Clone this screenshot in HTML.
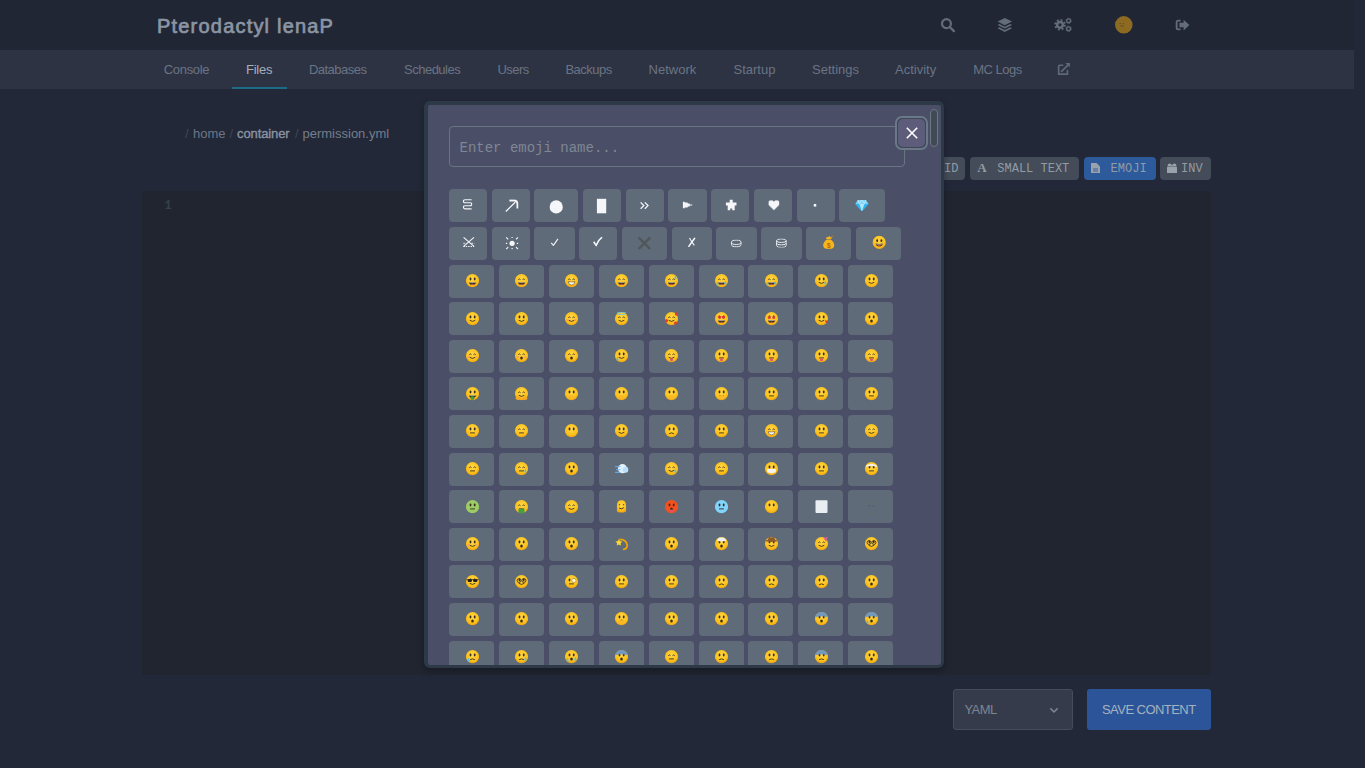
<!DOCTYPE html>
<html><head><meta charset="utf-8">
<style>
*{box-sizing:border-box}
html,body{margin:0;padding:0}
body{width:1365px;height:768px;overflow:hidden;background:#232838;position:relative;font-family:"Liberation Sans",sans-serif}
.a{position:absolute}
.t{position:absolute;white-space:nowrap;line-height:1}
.nav{color:#6b7483;font-size:13px;letter-spacing:-0.5px}
.mono{font-family:"Liberation Mono",monospace}
.tile{position:absolute;background:#5f6b78;border-radius:4px;display:flex;align-items:center;justify-content:center}
.tile svg{display:block}
.tb{position:absolute;height:22.5px;top:157.2px;background:#434c58;border-radius:4px;color:#939aa4;font-family:"Liberation Mono",monospace;font-size:12px}
</style></head><body>
<svg width="0" height="0" style="position:absolute"><defs>
<radialGradient id="fy" cx="50%" cy="38%" r="62%"><stop offset="0" stop-color="#ffd84a"/><stop offset=".7" stop-color="#fcc21b"/><stop offset="1" stop-color="#f0a10e"/></radialGradient>
</defs></svg>

<div class="a" style="left:0;top:0;width:1354px;height:50px;background:#212634"></div>
<div class="a" style="left:0;top:50px;width:1354px;height:39px;background:#2d3343"></div>
<div class="t" style="left:157px;top:16px;font-size:20px;color:#8b95a3;letter-spacing:1.2px;-webkit-text-stroke:0.7px #8b95a3">Pterodactyl lenaP</div>
<svg class="a" style="left:940px;top:17px" width="16" height="16" viewBox="0 0 16 16"><circle cx="6.45" cy="6.65" r="4.45" fill="none" stroke="#636c79" stroke-width="2.2"/><path d="M9.8 10 L13.9 14.1" stroke="#636c79" stroke-width="2.4" stroke-linecap="round"/></svg>
<svg class="a" style="left:997px;top:17px" width="16" height="16" viewBox="0 0 16 16"><path d="M7.8 0.9 L15 4.6 L7.8 8.3 L0.6 4.6Z" fill="#636c79"/><path d="M2.4 6.9 L0.6 7.9 L7.8 11.6 L15 7.9 L13.2 6.9 L7.8 9.7 Z" fill="#636c79"/><path d="M2.4 10.3 L0.6 11.3 L7.8 15 L15 11.3 L13.2 10.3 L7.8 13.1 Z" fill="#636c79"/></svg>
<svg class="a" style="left:1053px;top:17px" width="20" height="16" viewBox="0 0 20 16"><circle cx="7" cy="7.8" r="4.1" fill="#636c79"/><circle cx="7" cy="7.8" r="4.9" fill="none" stroke="#636c79" stroke-width="1.8" stroke-dasharray="1.9 1.95"/><circle cx="7" cy="7.8" r="1.6" fill="#212634"/><circle cx="15.6" cy="3.8" r="1.9" fill="none" stroke="#636c79" stroke-width="1.3"/><circle cx="15.6" cy="3.8" r="2.6" fill="none" stroke="#636c79" stroke-width="1" stroke-dasharray="1.4 1.3"/><circle cx="15.6" cy="11.7" r="1.9" fill="none" stroke="#636c79" stroke-width="1.3"/><circle cx="15.6" cy="11.7" r="2.6" fill="none" stroke="#636c79" stroke-width="1" stroke-dasharray="1.4 1.3"/></svg>
<svg class="a" style="left:1114.6px;top:15.9px" width="18" height="18" viewBox="0 0 18 18"><circle cx="8.8" cy="8.85" r="8.75" fill="#8c6a22"/><path d="M4.6 7.5 H5.8 M7.8 7.5 H9" stroke="#5a4520" stroke-width=".8"/><path d="M5.6 9.6 Q7.2 11 8.8 9.6" stroke="#5a4520" stroke-width=".9" fill="none"/></svg>
<svg class="a" style="left:1175px;top:19px" width="15" height="12" viewBox="0 0 15 12"><path d="M5.6 1.6 H3.2 Q1.6 1.6 1.6 3.2 V8.8 Q1.6 10.4 3.2 10.4 H5.6" stroke="#636c79" stroke-width="1.8" fill="none"/><path d="M4.4 3.7 H8.6 V0.7 L14.4 6 L8.6 11.4 V8.3 H4.4Z" fill="#636c79"/></svg>
<div class="t nav" style="left:163.7px;top:63px;color:#6b7483;letter-spacing:-0.3px">Console</div>
<div class="t nav" style="left:245.9px;top:63px;color:#a7afba;letter-spacing:-0.2px">Files</div>
<div class="t nav" style="left:308.9px;top:63px;color:#6b7483;letter-spacing:-0.5px">Databases</div>
<div class="t nav" style="left:404px;top:63px;color:#6b7483;letter-spacing:-0.5px">Schedules</div>
<div class="t nav" style="left:497.4px;top:63px;color:#6b7483;letter-spacing:-0.5px">Users</div>
<div class="t nav" style="left:565.4px;top:63px;color:#6b7483;letter-spacing:-0.5px">Backups</div>
<div class="t nav" style="left:648.6px;top:63px;color:#6b7483;letter-spacing:0px">Network</div>
<div class="t nav" style="left:733.5px;top:63px;color:#6b7483;letter-spacing:0px">Startup</div>
<div class="t nav" style="left:812.1px;top:63px;color:#6b7483;letter-spacing:0px">Settings</div>
<div class="t nav" style="left:895px;top:63px;color:#6b7483;letter-spacing:0px">Activity</div>
<div class="t nav" style="left:973.2px;top:63px;color:#6b7483;letter-spacing:-0.5px">MC Logs</div>
<div class="a" style="left:231.7px;top:86.8px;width:55.3px;height:2.2px;background:#1d6b86"></div>
<svg class="a" style="left:1056px;top:62px" width="14" height="14" viewBox="0 0 14 14"><path d="M6.6 3.25 H4 Q2.65 3.25 2.65 4.6 V12.05 H11.45 V8.6" stroke="#606976" stroke-width="1.7" fill="none" stroke-linecap="round"/><path d="M5.6 9.3 L11.6 3.3" stroke="#606976" stroke-width="1.7" stroke-linecap="round"/><path d="M9.4 1 H13.9 V5.5Z" fill="#606976"/></svg>
<div class="t" style="left:185px;top:127px;font-size:13px;color:#3f4756">/</div>
<div class="t" style="left:193px;top:127px;font-size:13px;color:#6c7686">home</div>
<div class="t" style="left:229.5px;top:127px;font-size:13px;color:#3f4756">/</div>
<div class="t" style="left:237px;top:127px;font-size:13px;color:#8a94a2;-webkit-text-stroke:0.35px #8a94a2;letter-spacing:-0.1px">container</div>
<div class="t" style="left:295px;top:127px;font-size:13px;color:#3f4756">/</div>
<div class="t" style="left:302.5px;top:127px;font-size:13px;color:#747e8c">permission.yml</div>
<div class="tb" style="left:900px;width:65.4px"><span class="t" style="left:44px;top:5.5px">ID</span></div>
<div class="tb" style="left:970.3px;width:108.7px"><span class="t" style="left:7px;top:4px;font-family:'Liberation Serif',serif;font-size:13px;font-weight:bold">A</span><span class="t" style="left:27px;top:5.5px">SMALL TEXT</span></div>
<div class="tb" style="left:1084.1px;width:71.6px;background:#2d5a9b"><svg class="a" style="left:7.2px;top:5.6px" width="9" height="10.5" viewBox="0 0 9 10.5"><path d="M0 0 H5.6 L9 3.4 V10.5 H0Z" fill="#9aa2ac"/><path d="M2 6 H7 M2 8 H7" stroke="#2d5a9b" stroke-width=".9"/></svg><span class="t" style="left:26.5px;top:5.5px">EMOJI</span></div>
<div class="tb" style="left:1160px;width:50.5px"><svg class="a" style="left:7.2px;top:5.6px" width="10" height="10.5" viewBox="0 0 10 10.5"><rect x="0" y="3.6" width="10" height="6.9" rx="1" fill="#9aa2ac"/><path d="M0.5 3 Q0.5 0.4 2.4 0.4 Q4.4 0.4 5 2.6 Q5.6 0.4 7.6 0.4 Q9.5 0.4 9.5 3Z" fill="#9aa2ac"/></svg><span class="t" style="left:21px;top:5.5px">INV</span></div>
<div class="a" style="left:142px;top:191px;width:1069px;height:484px;border-radius:3px;background:#202530"></div>
<div class="t mono" style="left:164.5px;top:199.5px;font-size:12px;font-weight:bold;color:#36404b">1</div>
<div class="a" style="left:953px;top:689px;width:119.5px;height:40.5px;background:#363b4c;border:1px solid #464c5b;border-radius:3px"></div>
<div class="t" style="left:964.5px;top:703px;font-size:13px;letter-spacing:-0.6px;color:#7c8592">YAML</div>
<svg class="a" style="left:1048.5px;top:706.5px" width="10" height="7" viewBox="0 0 10 7"><path d="M1.4 1.4 L5 5 L8.6 1.4" stroke="#7c8592" stroke-width="1.5" fill="none"/></svg>
<div class="a" style="left:1087px;top:689px;width:123.5px;height:40.5px;background:#2c5599;border-radius:3px"></div>
<div class="t" style="left:1102px;top:703px;font-size:13px;letter-spacing:-0.55px;color:#a6b1bf">SAVE CONTENT</div>
<div class="a" style="left:424px;top:101px;width:520px;height:567px;background:#4a4e66;border:solid #2e3947;border-width:4px 3px 3px 4px;border-radius:6px;overflow:hidden;box-shadow:0 3px 6px rgba(10,12,18,.35)">
<div class="a" style="left:21.00px;top:21.00px;width:456px;height:41px;border:1px solid #687684;border-radius:4px"></div>
<div class="t mono" style="left:31.50px;top:35.50px;font-size:14px;color:#7f8794">Enter emoji name...</div>
<div class="a" style="left:466.80px;top:10.80px;width:33.6px;height:34.2px;border:2px solid #6a7888;border-radius:7px;background:#3f4756;padding:1px"><div style="width:100%;height:100%;background:#5d5c7b;border-radius:5px"></div></div>
<svg class="a" style="left:477.50px;top:22.30px" width="12" height="12" viewBox="0 0 12 12"><path d="M0.8 0.8 L11.2 11.2 M11.2 0.8 L0.8 11.2" stroke="#ffffff" stroke-width="1.6"/></svg>
<div class="a" style="left:501.80px;top:4.00px;width:8px;height:38px;border:1px solid #6c7784;border-radius:4px;background:#3f4a55"></div>
<div class="tile" style="left:21.00px;top:84.40px;width:38px;height:33px"><div style="transform:translate(-0.4px,-0.9px)"><svg width="10" height="11" viewBox="0 0 10 11"><path d="M9 0.7 H2.4 Q0.8 0.7 0.8 2.1 Q0.8 3.6 2.4 3.6 H7.6 Q9.2 3.6 9.2 5 Q9.2 6.6 7.6 6.6 H2.4 Q0.8 6.6 0.8 8 Q0.8 9.8 2.4 9.8 H9" stroke="#f4f6fa" stroke-width="1.1" fill="none"/></svg></div></div>
<div class="tile" style="left:64.20px;top:84.40px;width:38px;height:33px"><div style="transform:translate(0.8px,0.3px)"><svg width="14" height="13" viewBox="0 0 14 13"><path d="M1 12.2 L10.4 3" stroke="#f4f6fa" stroke-width="1.2"/><path d="M4.6 1.2 H9.6 Q12.6 1.4 12.6 4.4 V9.2" stroke="#f4f6fa" stroke-width="1.8" fill="none"/></svg></div></div>
<div class="tile" style="left:106.20px;top:84.40px;width:44px;height:33px"><div style="transform:translate(0.2px,0.9px)"><svg width="14" height="14" viewBox="0 0 14 14"><circle cx="7" cy="7" r="6.6" fill="#f4f6fa"/></svg></div></div>
<div class="tile" style="left:155.10px;top:84.40px;width:38px;height:33px"><div style="transform:translate(-0.3px,0.6px)"><svg width="10" height="15" viewBox="0 0 10 15"><rect x="0" y="0" width="9.6" height="15" fill="#f4f6fa"/></svg></div></div>
<div class="tile" style="left:198.00px;top:84.40px;width:38px;height:33px"><div style="transform:translate(-0.2px,-0.4px)"><svg width="10" height="8" viewBox="0 0 10 8"><path d="M0.8 0.8 L4 4 L0.8 7.2 M5 0.8 L8.2 4 L5 7.2" stroke="#f4f6fa" stroke-width="1.3" fill="none"/></svg></div></div>
<div class="tile" style="left:240.20px;top:84.40px;width:39px;height:33px"><div style="transform:translate(-0.3px,-0.4px)"><svg width="10" height="7" viewBox="0 0 10 7"><path d="M0 0 H2 V1 H5 V2 H7 V3 H9.6 V4 H7 V5 H5 V6 H2 V7 H0Z" fill="#f4f6fa"/></svg></div></div>
<div class="tile" style="left:283.30px;top:84.40px;width:38px;height:33px"><div style="transform:translate(0.7px,-0.5px)"><svg width="11" height="11" viewBox="0 0 11 11"><path d="M4 0 H7 V3 H11 V6 H9 V11 H6.5 V9 H4.5 V11 H2 V6 H0 V3 H4Z" fill="#f4f6fa"/></svg></div></div>
<div class="tile" style="left:326.40px;top:84.40px;width:38px;height:33px"><div style="transform:translate(0.4px,-0.7px)"><svg width="11" height="10" viewBox="0 0 11 10"><path d="M1 0 H4.5 V1 H6.5 V0 H10 V1 H11 V5 H10 V6 H9 V7 H8 V8 H7 V9 H6 V10 H5 V9 H4 V8 H3 V7 H2 V6 H1 V5 H0 V1 H1Z" fill="#f4f6fa"/></svg></div></div>
<div class="tile" style="left:369.00px;top:84.40px;width:38px;height:33px"><div style="transform:translate(-1.5px,-0.2px)"><svg width="3" height="3" viewBox="0 0 3 3"><rect width="3" height="3" fill="#f4f6fa"/></svg></div></div>
<div class="tile" style="left:411.10px;top:84.40px;width:46px;height:33px"><div style="transform:translate(-0.1px,-0.3px)"><svg width="14" height="12" viewBox="0 0 14 12"><path d="M3 0.4 H11 L13.6 4 L7 11.6 L0.4 4Z" fill="#7fd3f7"/><path d="M0.4 4 H13.6 L7 11.6Z" fill="#29b6f6"/><path d="M4.4 4 L7 11.6 L9.6 4Z" fill="#b3e5fc"/><path d="M3 0.4 L4.4 4 L7 0.4 L9.6 4 L11 0.4" stroke="#e1f5fe" stroke-width=".6" fill="none"/></svg></div></div>
<div class="tile" style="left:21.00px;top:121.80px;width:38px;height:33px"><div style="transform:translate(0.8px,-1.3px)"><svg width="12" height="11" viewBox="0 0 12 11"><path d="M0.8 0.6 L11.2 9.6 M11.2 0.6 L0.8 9.6" stroke="#f4f6fa" stroke-width="1.1" fill="none"/><path d="M0.6 6.6 H3.4 M8.6 6.6 H11.4 M0.6 9.8 H11.4" stroke="#f4f6fa" stroke-width="1" stroke-dasharray="1.4 1" fill="none"/></svg></div></div>
<div class="tile" style="left:64.20px;top:121.80px;width:38px;height:33px"><div style="transform:translate(0.6px,-0.3px)"><svg width="13" height="13" viewBox="0 0 13 13"><circle cx="6.5" cy="6.6" r="2.6" fill="#f4f6fa"/><path d="M6.5 0.2 V1.4 M6.5 11.4 V12.6 M0.2 6.6 H1.6 M11.2 6.6 H12.6 M0.6 0.6 L2.6 2.6 M10.4 10.4 L12.4 12.4 M12.4 0.6 L10.4 2.6 M2.6 10.4 L0.6 12.4" stroke="#f4f6fa" stroke-width="1.2"/></svg></div></div>
<div class="tile" style="left:106.20px;top:121.80px;width:41px;height:33px"><div style="transform:translate(-0.4px,-0.7px)"><svg width="8" height="8" viewBox="0 0 8 8"><path d="M0.6 4.6 L2.8 7 L7.4 0.6" stroke="#f4f6fa" stroke-width="1.1" fill="none"/></svg></div></div>
<div class="tile" style="left:151.30px;top:121.80px;width:38px;height:33px"><div style="transform:translate(-0.1px,-1.6px)"><svg width="10" height="10" viewBox="0 0 10 10"><path d="M0.8 5.4 L3.2 9 Q5 4 9.2 0.8" stroke="#f4f6fa" stroke-width="1.6" fill="none"/></svg></div></div>
<div class="tile" style="left:194.30px;top:121.80px;width:45px;height:33px"><div style="transform:translate(-0.1px,-0.3px)"><svg width="13" height="13" viewBox="0 0 13 13"><path d="M1.4 1.4 L11.6 11.6 M11.6 1.4 L1.4 11.6" stroke="#4f5759" stroke-width="2.4" stroke-linecap="round"/></svg></div></div>
<div class="tile" style="left:244.10px;top:121.80px;width:40px;height:33px"><div style="transform:translate(-0.3px,-0.8px)"><svg width="8" height="10" viewBox="0 0 8 10"><path d="M7.4 0.5 Q4.4 4.2 0.8 9.6" stroke="#f4f6fa" stroke-width="1.5" fill="none"/><path d="M1.8 0.8 Q3.8 4.6 6.6 8.2" stroke="#f4f6fa" stroke-width="1.1" fill="none"/></svg></div></div>
<div class="tile" style="left:288.20px;top:121.80px;width:41px;height:33px"><div style="transform:translate(-0.2px,0.5px)"><svg width="11" height="8" viewBox="0 0 11 8"><ellipse cx="5.5" cy="2.8" rx="4.8" ry="2.2" fill="none" stroke="#f4f6fa" stroke-width=".9"/><path d="M0.7 2.8 V5 Q0.7 7.3 5.5 7.3 Q10.3 7.3 10.3 5 V2.8" stroke="#f4f6fa" stroke-width=".9" fill="none"/></svg></div></div>
<div class="tile" style="left:333.10px;top:121.80px;width:41px;height:33px"><div style="transform:translate(-0.1px,-0.5px)"><svg width="11" height="9.5" viewBox="0 0 11 9.5"><ellipse cx="5.5" cy="2.2" rx="4.8" ry="1.8" fill="none" stroke="#f4f6fa" stroke-width=".9"/><path d="M0.7 2.2 V7 Q0.7 9 5.5 9 Q10.3 9 10.3 7 V2.2 M0.7 4.6 Q0.7 6.4 5.5 6.4 Q10.3 6.4 10.3 4.6" stroke="#f4f6fa" stroke-width=".9" fill="none"/></svg></div></div>
<div class="tile" style="left:378.30px;top:121.80px;width:45px;height:33px"><div style="transform:translate(0.2px,-0.5px)"><svg width="13" height="14" viewBox="0 0 13 14"><path d="M4.6 4 Q1 6.6 1 10 Q1 13.6 6.5 13.6 Q12 13.6 12 10 Q12 6.6 8.4 4Z" fill="#f9b41c"/><path d="M4 3.6 H9 L10 1.6 Q8.4 2.4 7.6 0.6 Q6.4 2 4.4 1.4Z" fill="#f9b41c"/><path d="M8 2.4 L11 0.4" stroke="#d88a00" stroke-width=".8"/><text x="6.5" y="12" font-size="6.5" text-anchor="middle" fill="#b06a00" font-family="Liberation Sans" font-weight="bold">$</text></svg></div></div>
<div class="tile" style="left:428.30px;top:121.80px;width:45px;height:33px"><div style="transform:translate(0.2px,-0.6px)"><svg width="14" height="14" viewBox="0 0 14 14"><circle cx="7" cy="7" r="6.6" fill="url(#fy)"/><ellipse cx="5" cy="5.3" rx="0.95" ry="1.4" fill="#3a2a1f"/><ellipse cx="9.2" cy="5.3" rx="0.95" ry="1.4" fill="#3a2a1f"/><path d="M3.4 8.2 Q7 8.8 10.8 8.2 Q10.2 11.2 7 11.2 Q3.8 11.2 3.4 8.2Z" fill="#3a2a1f"/><path d="M3.6 8.3 Q7 8.9 10.6 8.3 L10.5 8.9 Q7 9.4 3.7 8.9Z" fill="#e8e0d0"/><path d="M5 10.3 Q7 9.6 9 10.3 Q8 11.1 7 11.1 Q6 11.1 5 10.3Z" fill="#ec6a6a"/></svg></div></div>
<div class="tile" style="left:21.00px;top:159.50px;width:45px;height:33px"><div style="transform:translate(0.5px,-0.3px)"><svg width="14" height="14" viewBox="0 0 14 14"><circle cx="7" cy="7" r="6.6" fill="url(#fy)"/><ellipse cx="5" cy="5.3" rx="0.95" ry="1.4" fill="#3a2a1f"/><ellipse cx="9.2" cy="5.3" rx="0.95" ry="1.4" fill="#3a2a1f"/><path d="M3.4 8.2 Q7 8.8 10.8 8.2 Q10.2 11.2 7 11.2 Q3.8 11.2 3.4 8.2Z" fill="#3a2a1f"/><path d="M3.6 8.3 Q7 8.9 10.6 8.3 L10.5 8.9 Q7 9.4 3.7 8.9Z" fill="#e8e0d0"/><path d="M5 10.3 Q7 9.6 9 10.3 Q8 11.1 7 11.1 Q6 11.1 5 10.3Z" fill="#ec6a6a"/></svg></div></div>
<div class="tile" style="left:70.90px;top:159.50px;width:45px;height:33px"><div style="transform:translate(0.5px,-0.3px)"><svg width="14" height="14" viewBox="0 0 14 14"><circle cx="7" cy="7" r="6.6" fill="url(#fy)"/><path d="M3.8 5.9 Q4.9 4.6 6 5.9 M8 5.9 Q9.1 4.6 10.2 5.9" stroke="#3a2a1f" stroke-width="0.9" fill="none"/><path d="M3.4 8.2 Q7 8.8 10.8 8.2 Q10.2 11.2 7 11.2 Q3.8 11.2 3.4 8.2Z" fill="#3a2a1f"/><path d="M3.6 8.3 Q7 8.9 10.6 8.3 L10.5 8.9 Q7 9.4 3.7 8.9Z" fill="#e8e0d0"/><path d="M5 10.3 Q7 9.6 9 10.3 Q8 11.1 7 11.1 Q6 11.1 5 10.3Z" fill="#ec6a6a"/></svg></div></div>
<div class="tile" style="left:120.80px;top:159.50px;width:45px;height:33px"><div style="transform:translate(0.5px,-0.3px)"><svg width="14" height="14" viewBox="0 0 14 14"><circle cx="7" cy="7" r="6.6" fill="url(#fy)"/><path d="M3.8 5.9 Q4.9 4.6 6 5.9 M8 5.9 Q9.1 4.6 10.2 5.9" stroke="#3a2a1f" stroke-width="0.9" fill="none"/><path d="M3.6 8 Q7 8.6 10.4 8 Q9.8 11.2 7 11.2 Q4.2 11.2 3.6 8Z" fill="#fff" stroke="#3a2a1f" stroke-width="0.5"/></svg></div></div>
<div class="tile" style="left:170.70px;top:159.50px;width:45px;height:33px"><div style="transform:translate(0.5px,-0.3px)"><svg width="14" height="14" viewBox="0 0 14 14"><circle cx="7" cy="7" r="6.6" fill="url(#fy)"/><path d="M3.8 5.9 Q4.9 4.6 6 5.9 M8 5.9 Q9.1 4.6 10.2 5.9" stroke="#3a2a1f" stroke-width="0.9" fill="none"/><path d="M3.4 8.2 Q7 8.8 10.8 8.2 Q10.2 11.2 7 11.2 Q3.8 11.2 3.4 8.2Z" fill="#3a2a1f"/><path d="M3.6 8.3 Q7 8.9 10.6 8.3 L10.5 8.9 Q7 9.4 3.7 8.9Z" fill="#e8e0d0"/><path d="M5 10.3 Q7 9.6 9 10.3 Q8 11.1 7 11.1 Q6 11.1 5 10.3Z" fill="#ec6a6a"/></svg></div></div>
<div class="tile" style="left:220.60px;top:159.50px;width:45px;height:33px"><div style="transform:translate(0.5px,-0.3px)"><svg width="14" height="14" viewBox="0 0 14 14"><circle cx="7" cy="7" r="6.6" fill="url(#fy)"/><path d="M3.8 5.9 Q4.9 4.6 6 5.9 M8 5.9 Q9.1 4.6 10.2 5.9" stroke="#3a2a1f" stroke-width="0.9" fill="none"/><path d="M3.4 8.2 Q7 8.8 10.8 8.2 Q10.2 11.2 7 11.2 Q3.8 11.2 3.4 8.2Z" fill="#3a2a1f"/><path d="M3.6 8.3 Q7 8.9 10.6 8.3 L10.5 8.9 Q7 9.4 3.7 8.9Z" fill="#e8e0d0"/><path d="M5 10.3 Q7 9.6 9 10.3 Q8 11.1 7 11.1 Q6 11.1 5 10.3Z" fill="#ec6a6a"/><path d="M11 1.4 Q12.8 4 11.8 5.2 Q10.6 6 10 4.8 Q10 3.4 11 1.4Z" fill="#4fc3f7"/></svg></div></div>
<div class="tile" style="left:270.50px;top:159.50px;width:45px;height:33px"><div style="transform:translate(0.5px,-0.3px)"><svg width="14" height="14" viewBox="0 0 14 14"><circle cx="7" cy="7" r="6.6" fill="url(#fy)"/><path d="M3.8 5.9 Q4.9 4.6 6 5.9 M8 5.9 Q9.1 4.6 10.2 5.9" stroke="#3a2a1f" stroke-width="0.9" fill="none"/><path d="M3.4 8.2 Q7 8.8 10.8 8.2 Q10.2 11.2 7 11.2 Q3.8 11.2 3.4 8.2Z" fill="#3a2a1f"/><path d="M3.6 8.3 Q7 8.9 10.6 8.3 L10.5 8.9 Q7 9.4 3.7 8.9Z" fill="#e8e0d0"/><path d="M5 10.3 Q7 9.6 9 10.3 Q8 11.1 7 11.1 Q6 11.1 5 10.3Z" fill="#ec6a6a"/><path d="M10.8 7 Q12.6 9.6 11.6 10.8 Q10.4 11.6 9.8 10.4 Q9.8 9 10.8 7Z" fill="#4fc3f7"/><path d="M3 8 Q4.6 10.6 3.8 11.8 Q2.6 12.6 2 11.4 Q2 10 3 8Z" fill="#4fc3f7"/></svg></div></div>
<div class="tile" style="left:320.40px;top:159.50px;width:45px;height:33px"><div style="transform:translate(0.5px,-0.3px)"><svg width="14" height="14" viewBox="0 0 14 14"><circle cx="7" cy="7" r="6.6" fill="url(#fy)"/><path d="M3.8 5.9 Q4.9 4.6 6 5.9 M8 5.9 Q9.1 4.6 10.2 5.9" stroke="#3a2a1f" stroke-width="0.9" fill="none"/><path d="M3.4 8.2 Q7 8.8 10.8 8.2 Q10.2 11.2 7 11.2 Q3.8 11.2 3.4 8.2Z" fill="#3a2a1f"/><path d="M3.6 8.3 Q7 8.9 10.6 8.3 L10.5 8.9 Q7 9.4 3.7 8.9Z" fill="#e8e0d0"/><path d="M5 10.3 Q7 9.6 9 10.3 Q8 11.1 7 11.1 Q6 11.1 5 10.3Z" fill="#ec6a6a"/><path d="M10.8 7 Q12.6 9.6 11.6 10.8 Q10.4 11.6 9.8 10.4 Q9.8 9 10.8 7Z" fill="#4fc3f7"/><path d="M3 8 Q4.6 10.6 3.8 11.8 Q2.6 12.6 2 11.4 Q2 10 3 8Z" fill="#4fc3f7"/></svg></div></div>
<div class="tile" style="left:370.30px;top:159.50px;width:45px;height:33px"><div style="transform:translate(0.5px,-0.3px)"><svg width="14" height="14" viewBox="0 0 14 14"><circle cx="7" cy="7" r="6.6" fill="url(#fy)"/><ellipse cx="5" cy="5.3" rx="0.95" ry="1.4" fill="#3a2a1f"/><ellipse cx="9.2" cy="5.3" rx="0.95" ry="1.4" fill="#3a2a1f"/><path d="M4.2 8.6 Q7 10.8 9.8 8.6" stroke="#3a2a1f" stroke-width="0.9" fill="none"/><path d="M10.8 7 Q12.6 9.6 11.6 10.8 Q10.4 11.6 9.8 10.4 Q9.8 9 10.8 7Z" fill="#4fc3f7"/></svg></div></div>
<div class="tile" style="left:420.20px;top:159.50px;width:45px;height:33px"><div style="transform:translate(0.5px,-0.3px)"><svg width="14" height="14" viewBox="0 0 14 14"><circle cx="7" cy="7" r="6.6" fill="url(#fy)"/><ellipse cx="5" cy="5.3" rx="0.95" ry="1.4" fill="#3a2a1f"/><ellipse cx="9.2" cy="5.3" rx="0.95" ry="1.4" fill="#3a2a1f"/><path d="M4.2 8.6 Q7 10.8 9.8 8.6" stroke="#3a2a1f" stroke-width="0.9" fill="none"/></svg></div></div>
<div class="tile" style="left:21.00px;top:197.10px;width:45px;height:33px"><div style="transform:translate(0.5px,-0.3px)"><svg width="14" height="14" viewBox="0 0 14 14"><circle cx="7" cy="7" r="6.6" fill="url(#fy)"/><ellipse cx="5" cy="5.3" rx="0.95" ry="1.4" fill="#3a2a1f"/><ellipse cx="9.2" cy="5.3" rx="0.95" ry="1.4" fill="#3a2a1f"/><path d="M4.2 8.6 Q7 10.8 9.8 8.6" stroke="#3a2a1f" stroke-width="0.9" fill="none"/></svg></div></div>
<div class="tile" style="left:70.90px;top:197.10px;width:45px;height:33px"><div style="transform:translate(0.5px,-0.3px)"><svg width="14" height="14" viewBox="0 0 14 14"><circle cx="7" cy="7" r="6.6" fill="url(#fy)"/><ellipse cx="5" cy="5.3" rx="0.95" ry="1.4" fill="#3a2a1f"/><ellipse cx="9.2" cy="5.3" rx="0.95" ry="1.4" fill="#3a2a1f"/><path d="M4.2 8.6 Q7 10.8 9.8 8.6" stroke="#3a2a1f" stroke-width="0.9" fill="none"/></svg></div></div>
<div class="tile" style="left:120.80px;top:197.10px;width:45px;height:33px"><div style="transform:translate(0.5px,-0.3px)"><svg width="14" height="14" viewBox="0 0 14 14"><circle cx="7" cy="7" r="6.6" fill="url(#fy)"/><path d="M3.8 5.9 Q4.9 4.6 6 5.9 M8 5.9 Q9.1 4.6 10.2 5.9" stroke="#3a2a1f" stroke-width="0.9" fill="none"/><path d="M4.2 8.6 Q7 10.8 9.8 8.6" stroke="#3a2a1f" stroke-width="0.9" fill="none"/><ellipse cx="3.4" cy="8.4" rx="1.3" ry="0.9" fill="#f48a8a" opacity=".7"/><ellipse cx="10.6" cy="8.4" rx="1.3" ry="0.9" fill="#f48a8a" opacity=".7"/></svg></div></div>
<div class="tile" style="left:170.70px;top:197.10px;width:45px;height:33px"><div style="transform:translate(0.5px,-0.3px)"><svg width="14" height="14" viewBox="0 0 14 14"><circle cx="7" cy="7" r="6.6" fill="url(#fy)"/><path d="M3.8 5.9 Q4.9 4.6 6 5.9 M8 5.9 Q9.1 4.6 10.2 5.9" stroke="#3a2a1f" stroke-width="0.9" fill="none"/><path d="M4.2 8.6 Q7 10.8 9.8 8.6" stroke="#3a2a1f" stroke-width="0.9" fill="none"/><ellipse cx="7" cy="1.6" rx="4.6" ry="1.2" fill="none" stroke="#5fc5f0" stroke-width="0.9"/></svg></div></div>
<div class="tile" style="left:220.60px;top:197.10px;width:45px;height:33px"><div style="transform:translate(0.5px,-0.3px)"><svg width="14" height="14" viewBox="0 0 14 14"><circle cx="7" cy="7" r="6.6" fill="url(#fy)"/><path d="M3.8 5.9 Q4.9 4.6 6 5.9 M8 5.9 Q9.1 4.6 10.2 5.9" stroke="#3a2a1f" stroke-width="0.9" fill="none"/><path d="M4.2 8.6 Q7 10.8 9.8 8.6" stroke="#3a2a1f" stroke-width="0.9" fill="none"/><circle cx="2" cy="9" r="1.6" fill="#e53935"/><circle cx="12" cy="2.4" r="1.6" fill="#e53935"/><circle cx="11" cy="11.2" r="1.5" fill="#e53935"/></svg></div></div>
<div class="tile" style="left:270.50px;top:197.10px;width:45px;height:33px"><div style="transform:translate(0.5px,-0.3px)"><svg width="14" height="14" viewBox="0 0 14 14"><circle cx="7" cy="7" r="6.6" fill="url(#fy)"/><ellipse cx="5" cy="5.3" rx="0.95" ry="1.4" fill="#3a2a1f"/><ellipse cx="9.2" cy="5.3" rx="0.95" ry="1.4" fill="#3a2a1f"/><path d="M3.4 8.2 Q7 8.8 10.8 8.2 Q10.2 11.2 7 11.2 Q3.8 11.2 3.4 8.2Z" fill="#3a2a1f"/><path d="M3.6 8.3 Q7 8.9 10.6 8.3 L10.5 8.9 Q7 9.4 3.7 8.9Z" fill="#e8e0d0"/><path d="M5 10.3 Q7 9.6 9 10.3 Q8 11.1 7 11.1 Q6 11.1 5 10.3Z" fill="#ec6a6a"/><path d="M3.2 5 Q4.4 3.6 5.2 4.8 Q6 3.6 7 5 Q6.6 6.6 5.2 7.4 Q3.6 6.6 3.2 5Z" fill="#e53935"/><path d="M7 5 Q8.2 3.6 9 4.8 Q9.8 3.6 10.8 5 Q10.4 6.6 9 7.4 Q7.4 6.6 7 5Z" fill="#e53935"/></svg></div></div>
<div class="tile" style="left:320.40px;top:197.10px;width:45px;height:33px"><div style="transform:translate(0.5px,-0.3px)"><svg width="14" height="14" viewBox="0 0 14 14"><circle cx="7" cy="7" r="6.6" fill="url(#fy)"/><ellipse cx="5" cy="5.3" rx="0.95" ry="1.4" fill="#3a2a1f"/><ellipse cx="9.2" cy="5.3" rx="0.95" ry="1.4" fill="#3a2a1f"/><path d="M3.4 8.2 Q7 8.8 10.8 8.2 Q10.2 11.2 7 11.2 Q3.8 11.2 3.4 8.2Z" fill="#3a2a1f"/><path d="M3.6 8.3 Q7 8.9 10.6 8.3 L10.5 8.9 Q7 9.4 3.7 8.9Z" fill="#e8e0d0"/><path d="M5 10.3 Q7 9.6 9 10.3 Q8 11.1 7 11.1 Q6 11.1 5 10.3Z" fill="#ec6a6a"/><path d="M4.8 3.4 L5.5 5 L7 5.1 L5.8 6.1 L6.2 7.6 L4.8 6.8 L3.4 7.6 L3.8 6.1 L2.6 5.1 L4.1 5Z" fill="#e53935"/><path d="M9.2 3.4 L9.9 5 L11.4 5.1 L10.2 6.1 L10.6 7.6 L9.2 6.8 L7.8 7.6 L8.2 6.1 L7 5.1 L8.5 5Z" fill="#e53935"/></svg></div></div>
<div class="tile" style="left:370.30px;top:197.10px;width:45px;height:33px"><div style="transform:translate(0.5px,-0.3px)"><svg width="14" height="14" viewBox="0 0 14 14"><circle cx="7" cy="7" r="6.6" fill="url(#fy)"/><ellipse cx="5" cy="5.3" rx="0.95" ry="1.4" fill="#3a2a1f"/><ellipse cx="9.2" cy="5.3" rx="0.95" ry="1.4" fill="#3a2a1f"/><path d="M4.2 8.6 Q7 10.8 9.8 8.6" stroke="#3a2a1f" stroke-width="0.9" fill="none"/><path d="M10.4 9 Q11.4 8 12.2 9 Q13 8 13.8 9 Q13.4 10.6 12.2 11.4 Q10.8 10.6 10.4 9Z" fill="#e53935"/></svg></div></div>
<div class="tile" style="left:420.20px;top:197.10px;width:45px;height:33px"><div style="transform:translate(0.5px,-0.3px)"><svg width="14" height="14" viewBox="0 0 14 14"><circle cx="7" cy="7" r="6.6" fill="url(#fy)"/><ellipse cx="5" cy="5.3" rx="0.95" ry="1.4" fill="#3a2a1f"/><ellipse cx="9.2" cy="5.3" rx="0.95" ry="1.4" fill="#3a2a1f"/><ellipse cx="7" cy="9.4" rx="1.3" ry="1.5" fill="#3a2a1f"/></svg></div></div>
<div class="tile" style="left:21.00px;top:234.70px;width:45px;height:33px"><div style="transform:translate(0.5px,-0.3px)"><svg width="14" height="14" viewBox="0 0 14 14"><circle cx="7" cy="7" r="6.6" fill="url(#fy)"/><path d="M3.8 5.9 Q4.9 4.6 6 5.9 M8 5.9 Q9.1 4.6 10.2 5.9" stroke="#3a2a1f" stroke-width="0.9" fill="none"/><path d="M4.2 8.6 Q7 10.8 9.8 8.6" stroke="#3a2a1f" stroke-width="0.9" fill="none"/><ellipse cx="3.4" cy="8.4" rx="1.3" ry="0.9" fill="#f48a8a" opacity=".7"/><ellipse cx="10.6" cy="8.4" rx="1.3" ry="0.9" fill="#f48a8a" opacity=".7"/></svg></div></div>
<div class="tile" style="left:70.90px;top:234.70px;width:45px;height:33px"><div style="transform:translate(0.5px,-0.3px)"><svg width="14" height="14" viewBox="0 0 14 14"><circle cx="7" cy="7" r="6.6" fill="url(#fy)"/><path d="M3.8 5.9 Q4.9 4.6 6 5.9 M8 5.9 Q9.1 4.6 10.2 5.9" stroke="#3a2a1f" stroke-width="0.9" fill="none"/><ellipse cx="7" cy="9.4" rx="1.3" ry="1.5" fill="#3a2a1f"/><ellipse cx="3.4" cy="8.4" rx="1.3" ry="0.9" fill="#f48a8a" opacity=".7"/><ellipse cx="10.6" cy="8.4" rx="1.3" ry="0.9" fill="#f48a8a" opacity=".7"/></svg></div></div>
<div class="tile" style="left:120.80px;top:234.70px;width:45px;height:33px"><div style="transform:translate(0.5px,-0.3px)"><svg width="14" height="14" viewBox="0 0 14 14"><circle cx="7" cy="7" r="6.6" fill="url(#fy)"/><path d="M3.8 5.9 Q4.9 4.6 6 5.9 M8 5.9 Q9.1 4.6 10.2 5.9" stroke="#3a2a1f" stroke-width="0.9" fill="none"/><ellipse cx="7" cy="9.4" rx="1.3" ry="1.5" fill="#3a2a1f"/></svg></div></div>
<div class="tile" style="left:170.70px;top:234.70px;width:45px;height:33px"><div style="transform:translate(0.5px,-0.3px)"><svg width="14" height="14" viewBox="0 0 14 14"><circle cx="7" cy="7" r="6.6" fill="url(#fy)"/><ellipse cx="5" cy="5.3" rx="0.95" ry="1.4" fill="#3a2a1f"/><ellipse cx="9.2" cy="5.3" rx="0.95" ry="1.4" fill="#3a2a1f"/><path d="M4.2 8.6 Q7 10.8 9.8 8.6" stroke="#3a2a1f" stroke-width="0.9" fill="none"/><path d="M3 8 Q4.6 10.6 3.8 11.8 Q2.6 12.6 2 11.4 Q2 10 3 8Z" fill="#4fc3f7"/></svg></div></div>
<div class="tile" style="left:220.60px;top:234.70px;width:45px;height:33px"><div style="transform:translate(0.5px,-0.3px)"><svg width="14" height="14" viewBox="0 0 14 14"><circle cx="7" cy="7" r="6.6" fill="url(#fy)"/><path d="M3.8 5.9 Q4.9 4.6 6 5.9 M8 5.9 Q9.1 4.6 10.2 5.9" stroke="#3a2a1f" stroke-width="0.9" fill="none"/><path d="M4.2 8.6 Q7 10.8 9.8 8.6" stroke="#3a2a1f" stroke-width="0.9" fill="none"/><path d="M5.6 10 Q7 9.4 8.4 10 V11.8 Q7 13.2 5.6 11.8Z" fill="#e0507a"/></svg></div></div>
<div class="tile" style="left:270.50px;top:234.70px;width:45px;height:33px"><div style="transform:translate(0.5px,-0.3px)"><svg width="14" height="14" viewBox="0 0 14 14"><circle cx="7" cy="7" r="6.6" fill="url(#fy)"/><ellipse cx="5" cy="5.3" rx="0.95" ry="1.4" fill="#3a2a1f"/><ellipse cx="9.2" cy="5.3" rx="0.95" ry="1.4" fill="#3a2a1f"/><path d="M4.6 9.2 H9.4" stroke="#3a2a1f" stroke-width="0.9"/><path d="M5.6 10 Q7 9.4 8.4 10 V11.8 Q7 13.2 5.6 11.8Z" fill="#e0507a"/></svg></div></div>
<div class="tile" style="left:320.40px;top:234.70px;width:45px;height:33px"><div style="transform:translate(0.5px,-0.3px)"><svg width="14" height="14" viewBox="0 0 14 14"><circle cx="7" cy="7" r="6.6" fill="url(#fy)"/><ellipse cx="5" cy="5.3" rx="0.95" ry="1.4" fill="#3a2a1f"/><ellipse cx="9.2" cy="5.3" rx="0.95" ry="1.4" fill="#3a2a1f"/><path d="M4.6 9.2 H9.4" stroke="#3a2a1f" stroke-width="0.9"/><path d="M5.6 10 Q7 9.4 8.4 10 V11.8 Q7 13.2 5.6 11.8Z" fill="#e0507a"/></svg></div></div>
<div class="tile" style="left:370.30px;top:234.70px;width:45px;height:33px"><div style="transform:translate(0.5px,-0.3px)"><svg width="14" height="14" viewBox="0 0 14 14"><circle cx="7" cy="7" r="6.6" fill="url(#fy)"/><ellipse cx="5" cy="5.3" rx="0.95" ry="1.4" fill="#3a2a1f"/><ellipse cx="9.2" cy="5.3" rx="0.95" ry="1.4" fill="#3a2a1f"/><path d="M4.6 9.2 H9.4" stroke="#3a2a1f" stroke-width="0.9"/><path d="M5.6 10 Q7 9.4 8.4 10 V11.8 Q7 13.2 5.6 11.8Z" fill="#e0507a"/></svg></div></div>
<div class="tile" style="left:420.20px;top:234.70px;width:45px;height:33px"><div style="transform:translate(0.5px,-0.3px)"><svg width="14" height="14" viewBox="0 0 14 14"><circle cx="7" cy="7" r="6.6" fill="url(#fy)"/><path d="M3.8 5.9 Q4.9 4.6 6 5.9 M8 5.9 Q9.1 4.6 10.2 5.9" stroke="#3a2a1f" stroke-width="0.9" fill="none"/><path d="M4.6 9.2 H9.4" stroke="#3a2a1f" stroke-width="0.9"/><path d="M5.6 10 Q7 9.4 8.4 10 V11.8 Q7 13.2 5.6 11.8Z" fill="#e0507a"/></svg></div></div>
<div class="tile" style="left:21.00px;top:272.30px;width:45px;height:33px"><div style="transform:translate(0.5px,-0.3px)"><svg width="14" height="14" viewBox="0 0 14 14"><circle cx="7" cy="7" r="6.6" fill="url(#fy)"/><ellipse cx="5" cy="5.3" rx="0.95" ry="1.4" fill="#3a2a1f"/><ellipse cx="9.2" cy="5.3" rx="0.95" ry="1.4" fill="#3a2a1f"/><path d="M3.4 8.2 Q7 8.8 10.8 8.2 Q10.2 11.2 7 11.2 Q3.8 11.2 3.4 8.2Z" fill="#3a2a1f"/><path d="M3.6 8.3 Q7 8.9 10.6 8.3 L10.5 8.9 Q7 9.4 3.7 8.9Z" fill="#e8e0d0"/><path d="M5 10.3 Q7 9.6 9 10.3 Q8 11.1 7 11.1 Q6 11.1 5 10.3Z" fill="#ec6a6a"/><rect x="5.2" y="9.6" width="3.6" height="3.4" rx="1.2" fill="#2ea043"/></svg></div></div>
<div class="tile" style="left:70.90px;top:272.30px;width:45px;height:33px"><div style="transform:translate(0.5px,-0.3px)"><svg width="14" height="14" viewBox="0 0 14 14"><circle cx="7" cy="7" r="6.6" fill="url(#fy)"/><path d="M3.8 5.9 Q4.9 4.6 6 5.9 M8 5.9 Q9.1 4.6 10.2 5.9" stroke="#3a2a1f" stroke-width="0.9" fill="none"/><path d="M4.2 8.6 Q7 10.8 9.8 8.6" stroke="#3a2a1f" stroke-width="0.9" fill="none"/><ellipse cx="3.6" cy="11.6" rx="2.6" ry="1.7" fill="#f9a825"/><ellipse cx="10.4" cy="11.6" rx="2.6" ry="1.7" fill="#f9a825"/></svg></div></div>
<div class="tile" style="left:120.80px;top:272.30px;width:45px;height:33px"><div style="transform:translate(0.5px,-0.3px)"><svg width="14" height="14" viewBox="0 0 14 14"><circle cx="7" cy="7" r="6.6" fill="url(#fy)"/><ellipse cx="5" cy="5.3" rx="0.95" ry="1.4" fill="#3a2a1f"/><ellipse cx="9.2" cy="5.3" rx="0.95" ry="1.4" fill="#3a2a1f"/><ellipse cx="7" cy="10.4" rx="3" ry="2.2" fill="#f9b825"/></svg></div></div>
<div class="tile" style="left:170.70px;top:272.30px;width:45px;height:33px"><div style="transform:translate(0.5px,-0.3px)"><svg width="14" height="14" viewBox="0 0 14 14"><circle cx="7" cy="7" r="6.6" fill="url(#fy)"/><ellipse cx="5" cy="5.3" rx="0.95" ry="1.4" fill="#3a2a1f"/><ellipse cx="9.2" cy="5.3" rx="0.95" ry="1.4" fill="#3a2a1f"/><ellipse cx="7" cy="10.4" rx="3" ry="2.2" fill="#f9b825"/></svg></div></div>
<div class="tile" style="left:220.60px;top:272.30px;width:45px;height:33px"><div style="transform:translate(0.5px,-0.3px)"><svg width="14" height="14" viewBox="0 0 14 14"><circle cx="7" cy="7" r="6.6" fill="url(#fy)"/><ellipse cx="5" cy="5.3" rx="0.95" ry="1.4" fill="#3a2a1f"/><ellipse cx="9.2" cy="5.3" rx="0.95" ry="1.4" fill="#3a2a1f"/><ellipse cx="7" cy="10.4" rx="3" ry="2.2" fill="#f9b825"/></svg></div></div>
<div class="tile" style="left:270.50px;top:272.30px;width:45px;height:33px"><div style="transform:translate(0.5px,-0.3px)"><svg width="14" height="14" viewBox="0 0 14 14"><circle cx="7" cy="7" r="6.6" fill="url(#fy)"/><ellipse cx="5" cy="5.3" rx="0.95" ry="1.4" fill="#3a2a1f"/><ellipse cx="9.2" cy="5.3" rx="0.95" ry="1.4" fill="#3a2a1f"/><path d="M4.6 9.2 H9.4" stroke="#3a2a1f" stroke-width="0.9"/><ellipse cx="7" cy="10.4" rx="3" ry="2.2" fill="#f9b825"/></svg></div></div>
<div class="tile" style="left:320.40px;top:272.30px;width:45px;height:33px"><div style="transform:translate(0.5px,-0.3px)"><svg width="14" height="14" viewBox="0 0 14 14"><circle cx="7" cy="7" r="6.6" fill="url(#fy)"/><ellipse cx="5" cy="5.3" rx="0.95" ry="1.4" fill="#3a2a1f"/><ellipse cx="9.2" cy="5.3" rx="0.95" ry="1.4" fill="#3a2a1f"/><path d="M4.6 9.2 H9.4" stroke="#3a2a1f" stroke-width="0.9"/></svg></div></div>
<div class="tile" style="left:370.30px;top:272.30px;width:45px;height:33px"><div style="transform:translate(0.5px,-0.3px)"><svg width="14" height="14" viewBox="0 0 14 14"><circle cx="7" cy="7" r="6.6" fill="url(#fy)"/><ellipse cx="5" cy="5.3" rx="0.95" ry="1.4" fill="#3a2a1f"/><ellipse cx="9.2" cy="5.3" rx="0.95" ry="1.4" fill="#3a2a1f"/><path d="M4.6 9.2 H9.4" stroke="#3a2a1f" stroke-width="0.9"/></svg></div></div>
<div class="tile" style="left:420.20px;top:272.30px;width:45px;height:33px"><div style="transform:translate(0.5px,-0.3px)"><svg width="14" height="14" viewBox="0 0 14 14"><circle cx="7" cy="7" r="6.6" fill="url(#fy)"/><ellipse cx="5" cy="5.3" rx="0.95" ry="1.4" fill="#3a2a1f"/><ellipse cx="9.2" cy="5.3" rx="0.95" ry="1.4" fill="#3a2a1f"/><path d="M4.6 9.2 H9.4" stroke="#3a2a1f" stroke-width="0.9"/></svg></div></div>
<div class="tile" style="left:21.00px;top:309.90px;width:45px;height:33px"><div style="transform:translate(0.5px,-0.3px)"><svg width="14" height="14" viewBox="0 0 14 14"><circle cx="7" cy="7" r="6.6" fill="url(#fy)"/><ellipse cx="5" cy="5.3" rx="0.95" ry="1.4" fill="#3a2a1f"/><ellipse cx="9.2" cy="5.3" rx="0.95" ry="1.4" fill="#3a2a1f"/><path d="M4.6 9.2 H9.4" stroke="#3a2a1f" stroke-width="0.9"/></svg></div></div>
<div class="tile" style="left:70.90px;top:309.90px;width:45px;height:33px"><div style="transform:translate(0.5px,-0.3px)"><svg width="14" height="14" viewBox="0 0 14 14"><circle cx="7" cy="7" r="6.6" fill="url(#fy)"/><path d="M3.8 5.9 Q4.9 4.6 6 5.9 M8 5.9 Q9.1 4.6 10.2 5.9" stroke="#3a2a1f" stroke-width="0.9" fill="none"/><path d="M4.6 9.2 H9.4" stroke="#3a2a1f" stroke-width="0.9"/></svg></div></div>
<div class="tile" style="left:120.80px;top:309.90px;width:45px;height:33px"><div style="transform:translate(0.5px,-0.3px)"><svg width="14" height="14" viewBox="0 0 14 14"><circle cx="7" cy="7" r="6.6" fill="url(#fy)"/><ellipse cx="5" cy="5.3" rx="0.95" ry="1.4" fill="#3a2a1f"/><ellipse cx="9.2" cy="5.3" rx="0.95" ry="1.4" fill="#3a2a1f"/></svg></div></div>
<div class="tile" style="left:170.70px;top:309.90px;width:45px;height:33px"><div style="transform:translate(0.5px,-0.3px)"><svg width="14" height="14" viewBox="0 0 14 14"><circle cx="7" cy="7" r="6.6" fill="url(#fy)"/><ellipse cx="5" cy="5.3" rx="0.95" ry="1.4" fill="#3a2a1f"/><ellipse cx="9.2" cy="5.3" rx="0.95" ry="1.4" fill="#3a2a1f"/><path d="M4.2 8.6 Q7 10.8 9.8 8.6" stroke="#3a2a1f" stroke-width="0.9" fill="none"/></svg></div></div>
<div class="tile" style="left:220.60px;top:309.90px;width:45px;height:33px"><div style="transform:translate(0.5px,-0.3px)"><svg width="14" height="14" viewBox="0 0 14 14"><circle cx="7" cy="7" r="6.6" fill="url(#fy)"/><ellipse cx="5" cy="5.3" rx="0.95" ry="1.4" fill="#3a2a1f"/><ellipse cx="9.2" cy="5.3" rx="0.95" ry="1.4" fill="#3a2a1f"/><path d="M4.6 10 Q7 8.4 9.4 10" stroke="#3a2a1f" stroke-width="0.9" fill="none"/></svg></div></div>
<div class="tile" style="left:270.50px;top:309.90px;width:45px;height:33px"><div style="transform:translate(0.5px,-0.3px)"><svg width="14" height="14" viewBox="0 0 14 14"><circle cx="7" cy="7" r="6.6" fill="url(#fy)"/><ellipse cx="5" cy="5.3" rx="0.95" ry="1.4" fill="#3a2a1f"/><ellipse cx="9.2" cy="5.3" rx="0.95" ry="1.4" fill="#3a2a1f"/><path d="M4.6 9.2 H9.4" stroke="#3a2a1f" stroke-width="0.9"/></svg></div></div>
<div class="tile" style="left:320.40px;top:309.90px;width:45px;height:33px"><div style="transform:translate(0.5px,-0.3px)"><svg width="14" height="14" viewBox="0 0 14 14"><circle cx="7" cy="7" r="6.6" fill="url(#fy)"/><path d="M3.8 5.9 Q4.9 4.6 6 5.9 M8 5.9 Q9.1 4.6 10.2 5.9" stroke="#3a2a1f" stroke-width="0.9" fill="none"/><path d="M3.6 8 Q7 8.6 10.4 8 Q9.8 11.2 7 11.2 Q4.2 11.2 3.6 8Z" fill="#fff" stroke="#3a2a1f" stroke-width="0.5"/></svg></div></div>
<div class="tile" style="left:370.30px;top:309.90px;width:45px;height:33px"><div style="transform:translate(0.5px,-0.3px)"><svg width="14" height="14" viewBox="0 0 14 14"><circle cx="7" cy="7" r="6.6" fill="url(#fy)"/><ellipse cx="5" cy="5.3" rx="0.95" ry="1.4" fill="#3a2a1f"/><ellipse cx="9.2" cy="5.3" rx="0.95" ry="1.4" fill="#3a2a1f"/><path d="M4.6 9.2 H9.4" stroke="#3a2a1f" stroke-width="0.9"/></svg></div></div>
<div class="tile" style="left:420.20px;top:309.90px;width:45px;height:33px"><div style="transform:translate(0.5px,-0.3px)"><svg width="14" height="14" viewBox="0 0 14 14"><circle cx="7" cy="7" r="6.6" fill="url(#fy)"/><path d="M3.8 5.9 Q4.9 4.6 6 5.9 M8 5.9 Q9.1 4.6 10.2 5.9" stroke="#3a2a1f" stroke-width="0.9" fill="none"/><path d="M4.2 8.6 Q7 10.8 9.8 8.6" stroke="#3a2a1f" stroke-width="0.9" fill="none"/></svg></div></div>
<div class="tile" style="left:21.00px;top:347.50px;width:45px;height:33px"><div style="transform:translate(0.5px,-0.3px)"><svg width="14" height="14" viewBox="0 0 14 14"><circle cx="7" cy="7" r="6.6" fill="url(#fy)"/><path d="M3.8 5.9 Q4.9 4.6 6 5.9 M8 5.9 Q9.1 4.6 10.2 5.9" stroke="#3a2a1f" stroke-width="0.9" fill="none"/><path d="M4.6 9.2 H9.4" stroke="#3a2a1f" stroke-width="0.9"/></svg></div></div>
<div class="tile" style="left:70.90px;top:347.50px;width:45px;height:33px"><div style="transform:translate(0.5px,-0.3px)"><svg width="14" height="14" viewBox="0 0 14 14"><circle cx="7" cy="7" r="6.6" fill="url(#fy)"/><path d="M3.8 5.9 Q4.9 4.6 6 5.9 M8 5.9 Q9.1 4.6 10.2 5.9" stroke="#3a2a1f" stroke-width="0.9" fill="none"/><path d="M4.6 9.2 H9.4" stroke="#3a2a1f" stroke-width="0.9"/><path d="M10.8 7 Q12.6 9.6 11.6 10.8 Q10.4 11.6 9.8 10.4 Q9.8 9 10.8 7Z" fill="#4fc3f7"/></svg></div></div>
<div class="tile" style="left:120.80px;top:347.50px;width:45px;height:33px"><div style="transform:translate(0.5px,-0.3px)"><svg width="14" height="14" viewBox="0 0 14 14"><circle cx="7" cy="7" r="6.6" fill="url(#fy)"/><ellipse cx="5" cy="5.3" rx="0.95" ry="1.4" fill="#3a2a1f"/><ellipse cx="9.2" cy="5.3" rx="0.95" ry="1.4" fill="#3a2a1f"/><ellipse cx="7" cy="9.4" rx="1.3" ry="1.5" fill="#3a2a1f"/></svg></div></div>
<div class="tile" style="left:170.70px;top:347.50px;width:45px;height:33px"><div style="transform:translate(0.5px,-0.3px)"><svg width="14" height="14" viewBox="0 0 14 14"><circle cx="8" cy="7" r="4.6" fill="#e3f2fd"/><circle cx="11" cy="8" r="3" fill="#bbdefb"/><path d="M0.6 5 H6 M1.6 8 H6 M0.6 10.6 H6" stroke="#64b5f6" stroke-width="1"/></svg></div></div>
<div class="tile" style="left:220.60px;top:347.50px;width:45px;height:33px"><div style="transform:translate(0.5px,-0.3px)"><svg width="14" height="14" viewBox="0 0 14 14"><circle cx="7" cy="7" r="6.6" fill="url(#fy)"/><path d="M3.8 5.9 Q4.9 4.6 6 5.9 M8 5.9 Q9.1 4.6 10.2 5.9" stroke="#3a2a1f" stroke-width="0.9" fill="none"/><path d="M4.2 8.6 Q7 10.8 9.8 8.6" stroke="#3a2a1f" stroke-width="0.9" fill="none"/><path d="M10.8 7 Q12.6 9.6 11.6 10.8 Q10.4 11.6 9.8 10.4 Q9.8 9 10.8 7Z" fill="#4fc3f7"/></svg></div></div>
<div class="tile" style="left:270.50px;top:347.50px;width:45px;height:33px"><div style="transform:translate(0.5px,-0.3px)"><svg width="14" height="14" viewBox="0 0 14 14"><circle cx="7" cy="7" r="6.6" fill="url(#fy)"/><path d="M3.8 5.9 Q4.9 4.6 6 5.9 M8 5.9 Q9.1 4.6 10.2 5.9" stroke="#3a2a1f" stroke-width="0.9" fill="none"/><path d="M4.6 9.2 H9.4" stroke="#3a2a1f" stroke-width="0.9"/></svg></div></div>
<div class="tile" style="left:320.40px;top:347.50px;width:45px;height:33px"><div style="transform:translate(0.5px,-0.3px)"><svg width="14" height="14" viewBox="0 0 14 14"><circle cx="7" cy="7" r="6.6" fill="url(#fy)"/><ellipse cx="5" cy="5.3" rx="0.95" ry="1.4" fill="#3a2a1f"/><ellipse cx="9.2" cy="5.3" rx="0.95" ry="1.4" fill="#3a2a1f"/><path d="M2.6 7.4 H11.4 V10.4 Q7 13 2.6 10.4Z" fill="#f2f2f2"/></svg></div></div>
<div class="tile" style="left:370.30px;top:347.50px;width:45px;height:33px"><div style="transform:translate(0.5px,-0.3px)"><svg width="14" height="14" viewBox="0 0 14 14"><circle cx="7" cy="7" r="6.6" fill="url(#fy)"/><ellipse cx="5" cy="5.3" rx="0.95" ry="1.4" fill="#3a2a1f"/><ellipse cx="9.2" cy="5.3" rx="0.95" ry="1.4" fill="#3a2a1f"/><path d="M4.6 9.2 H9.4" stroke="#3a2a1f" stroke-width="0.9"/></svg></div></div>
<div class="tile" style="left:420.20px;top:347.50px;width:45px;height:33px"><div style="transform:translate(0.5px,-0.3px)"><svg width="14" height="14" viewBox="0 0 14 14"><circle cx="7" cy="7" r="6.6" fill="url(#fy)"/><ellipse cx="5" cy="5.3" rx="0.95" ry="1.4" fill="#3a2a1f"/><ellipse cx="9.2" cy="5.3" rx="0.95" ry="1.4" fill="#3a2a1f"/><path d="M4.6 9.2 H9.4" stroke="#3a2a1f" stroke-width="0.9"/><path d="M1.8 3.6 Q7 0.4 12.2 3.6 V5.6 Q7 2.8 1.8 5.6Z" fill="#eeeeee"/></svg></div></div>
<div class="tile" style="left:21.00px;top:385.10px;width:45px;height:33px"><div style="transform:translate(0.5px,-0.3px)"><svg width="14" height="14" viewBox="0 0 14 14"><circle cx="7" cy="7" r="6.6" fill="#9ccc65"/><ellipse cx="5" cy="5.3" rx="0.95" ry="1.4" fill="#3a2a1f"/><ellipse cx="9.2" cy="5.3" rx="0.95" ry="1.4" fill="#3a2a1f"/><path d="M4.6 9.2 H9.4" stroke="#3a2a1f" stroke-width="0.9"/></svg></div></div>
<div class="tile" style="left:70.90px;top:385.10px;width:45px;height:33px"><div style="transform:translate(0.5px,-0.3px)"><svg width="14" height="14" viewBox="0 0 14 14"><circle cx="7" cy="7" r="6.6" fill="url(#fy)"/><path d="M3.8 5.9 Q4.9 4.6 6 5.9 M8 5.9 Q9.1 4.6 10.2 5.9" stroke="#3a2a1f" stroke-width="0.9" fill="none"/><path d="M4.6 9.2 H9.4" stroke="#3a2a1f" stroke-width="0.9"/><path d="M4 9 H10 V13 Q7 14 4 13Z" fill="#43a047"/></svg></div></div>
<div class="tile" style="left:120.80px;top:385.10px;width:45px;height:33px"><div style="transform:translate(0.5px,-0.3px)"><svg width="14" height="14" viewBox="0 0 14 14"><circle cx="7" cy="7" r="6.6" fill="url(#fy)"/><path d="M3.8 5.9 Q4.9 4.6 6 5.9 M8 5.9 Q9.1 4.6 10.2 5.9" stroke="#3a2a1f" stroke-width="0.9" fill="none"/><path d="M4.2 8.6 Q7 10.8 9.8 8.6" stroke="#3a2a1f" stroke-width="0.9" fill="none"/></svg></div></div>
<div class="tile" style="left:170.70px;top:385.10px;width:45px;height:33px"><div style="transform:translate(0.5px,-0.3px)"><svg width="14" height="14" viewBox="0 0 14 14"><path d="M2.4 6 Q2.4 0.6 7 0.6 Q11.6 0.6 11.6 6 V11 Q11 13.4 10 12 Q9 13.6 7.6 12.6 Q6 13.6 4.6 12.4 Q3 13.6 2.4 11Z" fill="url(#fy)"/><path d="M4.4 5 H5.6 M8.4 5 H9.6 M4.6 8.4 Q7 10 9.4 8" stroke="#3a2a1f" stroke-width="0.9" fill="none"/></svg></div></div>
<div class="tile" style="left:220.60px;top:385.10px;width:45px;height:33px"><div style="transform:translate(0.5px,-0.3px)"><svg width="14" height="14" viewBox="0 0 14 14"><circle cx="7" cy="7" r="6.6" fill="#f4511e"/><ellipse cx="5" cy="5.3" rx="0.95" ry="1.4" fill="#3a2a1f"/><ellipse cx="9.2" cy="5.3" rx="0.95" ry="1.4" fill="#3a2a1f"/><ellipse cx="7" cy="9.4" rx="1.3" ry="1.5" fill="#3a2a1f"/><path d="M5.6 10 Q7 9.4 8.4 10 V11.8 Q7 13.2 5.6 11.8Z" fill="#e0507a"/></svg></div></div>
<div class="tile" style="left:270.50px;top:385.10px;width:45px;height:33px"><div style="transform:translate(0.5px,-0.3px)"><svg width="14" height="14" viewBox="0 0 14 14"><circle cx="7" cy="7" r="6.6" fill="#81d4fa"/><ellipse cx="5" cy="5.3" rx="0.95" ry="1.4" fill="#3a2a1f"/><ellipse cx="9.2" cy="5.3" rx="0.95" ry="1.4" fill="#3a2a1f"/><path d="M4.6 9.2 H9.4" stroke="#3a2a1f" stroke-width="0.9"/></svg></div></div>
<div class="tile" style="left:320.40px;top:385.10px;width:45px;height:33px"><div style="transform:translate(0.5px,-0.3px)"><svg width="14" height="14" viewBox="0 0 14 14"><circle cx="7" cy="7" r="6.6" fill="url(#fy)"/><ellipse cx="5" cy="5.3" rx="0.95" ry="1.4" fill="#3a2a1f"/><ellipse cx="9.2" cy="5.3" rx="0.95" ry="1.4" fill="#3a2a1f"/></svg></div></div>
<div class="tile" style="left:370.30px;top:385.10px;width:45px;height:33px"><div style="transform:translate(0.5px,-0.3px)"><svg width="14" height="14" viewBox="0 0 14 14"><rect x="1" y="0.6" width="12" height="12.8" rx="1" fill="#e8eef2"/></svg></div></div>
<div class="tile" style="left:420.20px;top:385.10px;width:45px;height:33px"><div style="transform:translate(0.5px,-0.3px)"><svg width="14" height="14" viewBox="0 0 14 14"><circle cx="7" cy="7" r="6" fill="none" stroke="#6d6e60" stroke-width="0.8" stroke-dasharray="1 1.4"/><circle cx="5" cy="6" r=".7" fill="#555"/><circle cx="9" cy="6" r=".7" fill="#555"/></svg></div></div>
<div class="tile" style="left:21.00px;top:422.70px;width:45px;height:33px"><div style="transform:translate(0.5px,-0.3px)"><svg width="14" height="14" viewBox="0 0 14 14"><circle cx="7" cy="7" r="6.6" fill="url(#fy)"/><ellipse cx="5" cy="5.3" rx="0.95" ry="1.4" fill="#3a2a1f"/><ellipse cx="9.2" cy="5.3" rx="0.95" ry="1.4" fill="#3a2a1f"/><path d="M4.2 8.6 Q7 10.8 9.8 8.6" stroke="#3a2a1f" stroke-width="0.9" fill="none"/><ellipse cx="3.4" cy="8.4" rx="1.3" ry="0.9" fill="#f48a8a" opacity=".7"/><ellipse cx="10.6" cy="8.4" rx="1.3" ry="0.9" fill="#f48a8a" opacity=".7"/></svg></div></div>
<div class="tile" style="left:70.90px;top:422.70px;width:45px;height:33px"><div style="transform:translate(0.5px,-0.3px)"><svg width="14" height="14" viewBox="0 0 14 14"><circle cx="7" cy="7" r="6.6" fill="url(#fy)"/><ellipse cx="5" cy="5.3" rx="0.95" ry="1.4" fill="#3a2a1f"/><ellipse cx="9.2" cy="5.3" rx="0.95" ry="1.4" fill="#3a2a1f"/><ellipse cx="7" cy="9.4" rx="1.3" ry="1.5" fill="#3a2a1f"/></svg></div></div>
<div class="tile" style="left:120.80px;top:422.70px;width:45px;height:33px"><div style="transform:translate(0.5px,-0.3px)"><svg width="14" height="14" viewBox="0 0 14 14"><circle cx="7" cy="7" r="6.6" fill="url(#fy)"/><ellipse cx="5" cy="5.3" rx="0.95" ry="1.4" fill="#3a2a1f"/><ellipse cx="9.2" cy="5.3" rx="0.95" ry="1.4" fill="#3a2a1f"/><ellipse cx="7" cy="9.4" rx="1.3" ry="1.5" fill="#3a2a1f"/></svg></div></div>
<div class="tile" style="left:170.70px;top:422.70px;width:45px;height:33px"><div style="transform:translate(0.5px,-0.3px)"><svg width="14" height="14" viewBox="0 0 14 14"><path d="M5 2.6 Q11.6 2.4 12.8 8.4 Q12.6 12.6 8.4 12.8" stroke="#f0a500" stroke-width="1.7" fill="none"/><path d="M4.4 2.4 L5.5 4.6 L7.9 4.9 L6.1 6.5 L6.6 8.9 L4.4 7.7 L2.2 8.9 L2.7 6.5 L0.9 4.9 L3.3 4.6Z" fill="#fdd835"/></svg></div></div>
<div class="tile" style="left:220.60px;top:422.70px;width:45px;height:33px"><div style="transform:translate(0.5px,-0.3px)"><svg width="14" height="14" viewBox="0 0 14 14"><circle cx="7" cy="7" r="6.6" fill="url(#fy)"/><ellipse cx="5" cy="5.3" rx="0.95" ry="1.4" fill="#3a2a1f"/><ellipse cx="9.2" cy="5.3" rx="0.95" ry="1.4" fill="#3a2a1f"/><ellipse cx="7" cy="9.4" rx="1.3" ry="1.5" fill="#3a2a1f"/></svg></div></div>
<div class="tile" style="left:270.50px;top:422.70px;width:45px;height:33px"><div style="transform:translate(0.5px,-0.3px)"><svg width="14" height="14" viewBox="0 0 14 14"><circle cx="7" cy="7" r="6.6" fill="url(#fy)"/><ellipse cx="5" cy="5.3" rx="0.95" ry="1.4" fill="#3a2a1f"/><ellipse cx="9.2" cy="5.3" rx="0.95" ry="1.4" fill="#3a2a1f"/><ellipse cx="7" cy="9.4" rx="1.3" ry="1.5" fill="#3a2a1f"/><path d="M2.4 4 Q3.6 0.4 7 1 Q10.4 0.4 11.6 4 Q7 5.4 2.4 4Z" fill="#f0f0f0"/></svg></div></div>
<div class="tile" style="left:320.40px;top:422.70px;width:45px;height:33px"><div style="transform:translate(0.5px,-0.3px)"><svg width="14" height="14" viewBox="0 0 14 14"><circle cx="7" cy="7" r="6.6" fill="url(#fy)"/><ellipse cx="5" cy="5.3" rx="0.95" ry="1.4" fill="#3a2a1f"/><ellipse cx="9.2" cy="5.3" rx="0.95" ry="1.4" fill="#3a2a1f"/><path d="M4.2 8.6 Q7 10.8 9.8 8.6" stroke="#3a2a1f" stroke-width="0.9" fill="none"/><path d="M1 4.6 Q7 6 13 4.6 Q12.6 3 10.6 3 L9.6 0.4 Q7 1.2 4.4 0.4 L3.4 3 Q1.4 3 1 4.6Z" fill="#8d5a2b"/></svg></div></div>
<div class="tile" style="left:370.30px;top:422.70px;width:45px;height:33px"><div style="transform:translate(0.5px,-0.3px)"><svg width="14" height="14" viewBox="0 0 14 14"><circle cx="7" cy="7" r="6.6" fill="url(#fy)"/><path d="M3.8 5.9 Q4.9 4.6 6 5.9 M8 5.9 Q9.1 4.6 10.2 5.9" stroke="#3a2a1f" stroke-width="0.9" fill="none"/><path d="M4.2 8.6 Q7 10.8 9.8 8.6" stroke="#3a2a1f" stroke-width="0.9" fill="none"/><path d="M9 1 L13.4 0.4 L11.6 5Z" fill="#e05a9b"/></svg></div></div>
<div class="tile" style="left:420.20px;top:422.70px;width:45px;height:33px"><div style="transform:translate(0.5px,-0.3px)"><svg width="14" height="14" viewBox="0 0 14 14"><circle cx="7" cy="7" r="6.6" fill="url(#fy)"/><ellipse cx="5" cy="5.3" rx="0.95" ry="1.4" fill="#3a2a1f"/><ellipse cx="9.2" cy="5.3" rx="0.95" ry="1.4" fill="#3a2a1f"/><path d="M4.2 8.6 Q7 10.8 9.8 8.6" stroke="#3a2a1f" stroke-width="0.9" fill="none"/><circle cx="4.6" cy="5.8" r="2" fill="none" stroke="#4a3a2a" stroke-width="0.9"/><circle cx="9.4" cy="5.8" r="2" fill="none" stroke="#4a3a2a" stroke-width="0.9"/></svg></div></div>
<div class="tile" style="left:21.00px;top:460.30px;width:45px;height:33px"><div style="transform:translate(0.5px,-0.3px)"><svg width="14" height="14" viewBox="0 0 14 14"><circle cx="7" cy="7" r="6.6" fill="url(#fy)"/><ellipse cx="5" cy="5.3" rx="0.95" ry="1.4" fill="#3a2a1f"/><ellipse cx="9.2" cy="5.3" rx="0.95" ry="1.4" fill="#3a2a1f"/><path d="M4.2 8.6 Q7 10.8 9.8 8.6" stroke="#3a2a1f" stroke-width="0.9" fill="none"/><rect x="2.2" y="4.6" width="4.2" height="2.8" rx="1" fill="#222"/><rect x="7.6" y="4.6" width="4.2" height="2.8" rx="1" fill="#222"/><path d="M1 5 H13" stroke="#222" stroke-width="0.8"/></svg></div></div>
<div class="tile" style="left:70.90px;top:460.30px;width:45px;height:33px"><div style="transform:translate(0.5px,-0.3px)"><svg width="14" height="14" viewBox="0 0 14 14"><circle cx="7" cy="7" r="6.6" fill="url(#fy)"/><ellipse cx="5" cy="5.3" rx="0.95" ry="1.4" fill="#3a2a1f"/><ellipse cx="9.2" cy="5.3" rx="0.95" ry="1.4" fill="#3a2a1f"/><path d="M4.2 8.6 Q7 10.8 9.8 8.6" stroke="#3a2a1f" stroke-width="0.9" fill="none"/><circle cx="4.6" cy="5.8" r="2" fill="none" stroke="#4a3a2a" stroke-width="0.9"/><circle cx="9.4" cy="5.8" r="2" fill="none" stroke="#4a3a2a" stroke-width="0.9"/></svg></div></div>
<div class="tile" style="left:120.80px;top:460.30px;width:45px;height:33px"><div style="transform:translate(0.5px,-0.3px)"><svg width="14" height="14" viewBox="0 0 14 14"><circle cx="7" cy="7" r="6.6" fill="url(#fy)"/><ellipse cx="5" cy="5.3" rx="0.95" ry="1.4" fill="#3a2a1f"/><ellipse cx="9.2" cy="5.3" rx="0.95" ry="1.4" fill="#3a2a1f"/><path d="M4.6 9.2 H9.4" stroke="#3a2a1f" stroke-width="0.9"/><circle cx="9.4" cy="5.8" r="2.2" fill="#fff7c0" stroke="#b58b2b" stroke-width="0.7"/></svg></div></div>
<div class="tile" style="left:170.70px;top:460.30px;width:45px;height:33px"><div style="transform:translate(0.5px,-0.3px)"><svg width="14" height="14" viewBox="0 0 14 14"><circle cx="7" cy="7" r="6.6" fill="url(#fy)"/><ellipse cx="5" cy="5.3" rx="0.95" ry="1.4" fill="#3a2a1f"/><ellipse cx="9.2" cy="5.3" rx="0.95" ry="1.4" fill="#3a2a1f"/><path d="M4.6 9.2 H9.4" stroke="#3a2a1f" stroke-width="0.9"/></svg></div></div>
<div class="tile" style="left:220.60px;top:460.30px;width:45px;height:33px"><div style="transform:translate(0.5px,-0.3px)"><svg width="14" height="14" viewBox="0 0 14 14"><circle cx="7" cy="7" r="6.6" fill="url(#fy)"/><ellipse cx="5" cy="5.3" rx="0.95" ry="1.4" fill="#3a2a1f"/><ellipse cx="9.2" cy="5.3" rx="0.95" ry="1.4" fill="#3a2a1f"/><path d="M4.6 9.2 H9.4" stroke="#3a2a1f" stroke-width="0.9"/></svg></div></div>
<div class="tile" style="left:270.50px;top:460.30px;width:45px;height:33px"><div style="transform:translate(0.5px,-0.3px)"><svg width="14" height="14" viewBox="0 0 14 14"><circle cx="7" cy="7" r="6.6" fill="url(#fy)"/><ellipse cx="5" cy="5.3" rx="0.95" ry="1.4" fill="#3a2a1f"/><ellipse cx="9.2" cy="5.3" rx="0.95" ry="1.4" fill="#3a2a1f"/><path d="M4.6 10 Q7 8.4 9.4 10" stroke="#3a2a1f" stroke-width="0.9" fill="none"/></svg></div></div>
<div class="tile" style="left:320.40px;top:460.30px;width:45px;height:33px"><div style="transform:translate(0.5px,-0.3px)"><svg width="14" height="14" viewBox="0 0 14 14"><circle cx="7" cy="7" r="6.6" fill="url(#fy)"/><ellipse cx="5" cy="5.3" rx="0.95" ry="1.4" fill="#3a2a1f"/><ellipse cx="9.2" cy="5.3" rx="0.95" ry="1.4" fill="#3a2a1f"/><path d="M4.6 10 Q7 8.4 9.4 10" stroke="#3a2a1f" stroke-width="0.9" fill="none"/></svg></div></div>
<div class="tile" style="left:370.30px;top:460.30px;width:45px;height:33px"><div style="transform:translate(0.5px,-0.3px)"><svg width="14" height="14" viewBox="0 0 14 14"><circle cx="7" cy="7" r="6.6" fill="url(#fy)"/><ellipse cx="5" cy="5.3" rx="0.95" ry="1.4" fill="#3a2a1f"/><ellipse cx="9.2" cy="5.3" rx="0.95" ry="1.4" fill="#3a2a1f"/><path d="M4.6 10 Q7 8.4 9.4 10" stroke="#3a2a1f" stroke-width="0.9" fill="none"/></svg></div></div>
<div class="tile" style="left:420.20px;top:460.30px;width:45px;height:33px"><div style="transform:translate(0.5px,-0.3px)"><svg width="14" height="14" viewBox="0 0 14 14"><circle cx="7" cy="7" r="6.6" fill="url(#fy)"/><ellipse cx="5" cy="5.3" rx="0.95" ry="1.4" fill="#3a2a1f"/><ellipse cx="9.2" cy="5.3" rx="0.95" ry="1.4" fill="#3a2a1f"/><ellipse cx="7" cy="9.4" rx="1.3" ry="1.5" fill="#3a2a1f"/></svg></div></div>
<div class="tile" style="left:21.00px;top:497.90px;width:45px;height:33px"><div style="transform:translate(0.5px,-0.3px)"><svg width="14" height="14" viewBox="0 0 14 14"><circle cx="7" cy="7" r="6.6" fill="url(#fy)"/><ellipse cx="5" cy="5.3" rx="0.95" ry="1.4" fill="#3a2a1f"/><ellipse cx="9.2" cy="5.3" rx="0.95" ry="1.4" fill="#3a2a1f"/><ellipse cx="7" cy="9.4" rx="1.3" ry="1.5" fill="#3a2a1f"/></svg></div></div>
<div class="tile" style="left:70.90px;top:497.90px;width:45px;height:33px"><div style="transform:translate(0.5px,-0.3px)"><svg width="14" height="14" viewBox="0 0 14 14"><circle cx="7" cy="7" r="6.6" fill="url(#fy)"/><ellipse cx="5" cy="5.3" rx="0.95" ry="1.4" fill="#3a2a1f"/><ellipse cx="9.2" cy="5.3" rx="0.95" ry="1.4" fill="#3a2a1f"/><ellipse cx="7" cy="9.4" rx="1.3" ry="1.5" fill="#3a2a1f"/></svg></div></div>
<div class="tile" style="left:120.80px;top:497.90px;width:45px;height:33px"><div style="transform:translate(0.5px,-0.3px)"><svg width="14" height="14" viewBox="0 0 14 14"><circle cx="7" cy="7" r="6.6" fill="url(#fy)"/><ellipse cx="5" cy="5.3" rx="0.95" ry="1.4" fill="#3a2a1f"/><ellipse cx="9.2" cy="5.3" rx="0.95" ry="1.4" fill="#3a2a1f"/><ellipse cx="7" cy="9.4" rx="1.3" ry="1.5" fill="#3a2a1f"/></svg></div></div>
<div class="tile" style="left:170.70px;top:497.90px;width:45px;height:33px"><div style="transform:translate(0.5px,-0.3px)"><svg width="14" height="14" viewBox="0 0 14 14"><circle cx="7" cy="7" r="6.6" fill="url(#fy)"/><ellipse cx="5" cy="5.3" rx="0.95" ry="1.4" fill="#3a2a1f"/><ellipse cx="9.2" cy="5.3" rx="0.95" ry="1.4" fill="#3a2a1f"/><ellipse cx="7" cy="9.4" rx="1.3" ry="1.5" fill="#3a2a1f"/><ellipse cx="7" cy="10.4" rx="3" ry="2.2" fill="#f9b825"/></svg></div></div>
<div class="tile" style="left:220.60px;top:497.90px;width:45px;height:33px"><div style="transform:translate(0.5px,-0.3px)"><svg width="14" height="14" viewBox="0 0 14 14"><circle cx="7" cy="7" r="6.6" fill="url(#fy)"/><ellipse cx="5" cy="5.3" rx="0.95" ry="1.4" fill="#3a2a1f"/><ellipse cx="9.2" cy="5.3" rx="0.95" ry="1.4" fill="#3a2a1f"/><ellipse cx="7" cy="9.4" rx="1.3" ry="1.5" fill="#3a2a1f"/></svg></div></div>
<div class="tile" style="left:270.50px;top:497.90px;width:45px;height:33px"><div style="transform:translate(0.5px,-0.3px)"><svg width="14" height="14" viewBox="0 0 14 14"><circle cx="7" cy="7" r="6.6" fill="url(#fy)"/><ellipse cx="5" cy="5.3" rx="0.95" ry="1.4" fill="#3a2a1f"/><ellipse cx="9.2" cy="5.3" rx="0.95" ry="1.4" fill="#3a2a1f"/><ellipse cx="7" cy="9.4" rx="1.3" ry="1.5" fill="#3a2a1f"/></svg></div></div>
<div class="tile" style="left:320.40px;top:497.90px;width:45px;height:33px"><div style="transform:translate(0.5px,-0.3px)"><svg width="14" height="14" viewBox="0 0 14 14"><circle cx="7" cy="7" r="6.6" fill="url(#fy)"/><ellipse cx="5" cy="5.3" rx="0.95" ry="1.4" fill="#3a2a1f"/><ellipse cx="9.2" cy="5.3" rx="0.95" ry="1.4" fill="#3a2a1f"/><ellipse cx="7" cy="9.4" rx="1.3" ry="1.5" fill="#3a2a1f"/></svg></div></div>
<div class="tile" style="left:370.30px;top:497.90px;width:45px;height:33px"><div style="transform:translate(0.5px,-0.3px)"><svg width="14" height="14" viewBox="0 0 14 14"><circle cx="7" cy="7" r="6.6" fill="url(#fy)"/><ellipse cx="5" cy="5.3" rx="0.95" ry="1.4" fill="#3a2a1f"/><ellipse cx="9.2" cy="5.3" rx="0.95" ry="1.4" fill="#3a2a1f"/><ellipse cx="7" cy="9.4" rx="1.3" ry="1.5" fill="#3a2a1f"/><path d="M1.2 5.4 Q1.6 0.4 7 0.4 Q12.4 0.4 12.8 5.4 Q7 3.8 1.2 5.4Z" fill="#5b8fd9" opacity=".85"/></svg></div></div>
<div class="tile" style="left:420.20px;top:497.90px;width:45px;height:33px"><div style="transform:translate(0.5px,-0.3px)"><svg width="14" height="14" viewBox="0 0 14 14"><circle cx="7" cy="7" r="6.6" fill="url(#fy)"/><ellipse cx="5" cy="5.3" rx="0.95" ry="1.4" fill="#3a2a1f"/><ellipse cx="9.2" cy="5.3" rx="0.95" ry="1.4" fill="#3a2a1f"/><ellipse cx="7" cy="9.4" rx="1.3" ry="1.5" fill="#3a2a1f"/><path d="M1.2 5.4 Q1.6 0.4 7 0.4 Q12.4 0.4 12.8 5.4 Q7 3.8 1.2 5.4Z" fill="#5b8fd9" opacity=".85"/><path d="M3 8 Q4.6 10.6 3.8 11.8 Q2.6 12.6 2 11.4 Q2 10 3 8Z" fill="#4fc3f7"/></svg></div></div>
<div class="tile" style="left:21.00px;top:535.50px;width:45px;height:33px"><div style="transform:translate(0.5px,-0.3px)"><svg width="14" height="14" viewBox="0 0 14 14"><circle cx="7" cy="7" r="6.6" fill="url(#fy)"/><ellipse cx="5" cy="5.3" rx="0.95" ry="1.4" fill="#3a2a1f"/><ellipse cx="9.2" cy="5.3" rx="0.95" ry="1.4" fill="#3a2a1f"/><path d="M4.6 10 Q7 8.4 9.4 10" stroke="#3a2a1f" stroke-width="0.9" fill="none"/><path d="M3 8 Q4.6 10.6 3.8 11.8 Q2.6 12.6 2 11.4 Q2 10 3 8Z" fill="#4fc3f7"/></svg></div></div>
<div class="tile" style="left:70.90px;top:535.50px;width:45px;height:33px"><div style="transform:translate(0.5px,-0.3px)"><svg width="14" height="14" viewBox="0 0 14 14"><circle cx="7" cy="7" r="6.6" fill="url(#fy)"/><ellipse cx="5" cy="5.3" rx="0.95" ry="1.4" fill="#3a2a1f"/><ellipse cx="9.2" cy="5.3" rx="0.95" ry="1.4" fill="#3a2a1f"/><path d="M4.6 10 Q7 8.4 9.4 10" stroke="#3a2a1f" stroke-width="0.9" fill="none"/><path d="M10.8 7 Q12.6 9.6 11.6 10.8 Q10.4 11.6 9.8 10.4 Q9.8 9 10.8 7Z" fill="#4fc3f7"/></svg></div></div>
<div class="tile" style="left:120.80px;top:535.50px;width:45px;height:33px"><div style="transform:translate(0.5px,-0.3px)"><svg width="14" height="14" viewBox="0 0 14 14"><circle cx="7" cy="7" r="6.6" fill="url(#fy)"/><ellipse cx="5" cy="5.3" rx="0.95" ry="1.4" fill="#3a2a1f"/><ellipse cx="9.2" cy="5.3" rx="0.95" ry="1.4" fill="#3a2a1f"/><ellipse cx="7" cy="9.4" rx="1.3" ry="1.5" fill="#3a2a1f"/><path d="M10.8 7 Q12.6 9.6 11.6 10.8 Q10.4 11.6 9.8 10.4 Q9.8 9 10.8 7Z" fill="#4fc3f7"/><path d="M3 8 Q4.6 10.6 3.8 11.8 Q2.6 12.6 2 11.4 Q2 10 3 8Z" fill="#4fc3f7"/></svg></div></div>
<div class="tile" style="left:170.70px;top:535.50px;width:45px;height:33px"><div style="transform:translate(0.5px,-0.3px)"><svg width="14" height="14" viewBox="0 0 14 14"><circle cx="7" cy="7" r="6.6" fill="url(#fy)"/><ellipse cx="5" cy="5.3" rx="0.95" ry="1.4" fill="#3a2a1f"/><ellipse cx="9.2" cy="5.3" rx="0.95" ry="1.4" fill="#3a2a1f"/><ellipse cx="7" cy="9.4" rx="1.3" ry="1.5" fill="#3a2a1f"/><path d="M1.2 5.4 Q1.6 0.4 7 0.4 Q12.4 0.4 12.8 5.4 Q7 3.8 1.2 5.4Z" fill="#5b8fd9" opacity=".85"/></svg></div></div>
<div class="tile" style="left:220.60px;top:535.50px;width:45px;height:33px"><div style="transform:translate(0.5px,-0.3px)"><svg width="14" height="14" viewBox="0 0 14 14"><circle cx="7" cy="7" r="6.6" fill="url(#fy)"/><path d="M3.8 5.9 Q4.9 4.6 6 5.9 M8 5.9 Q9.1 4.6 10.2 5.9" stroke="#3a2a1f" stroke-width="0.9" fill="none"/><path d="M4.6 9.2 H9.4" stroke="#3a2a1f" stroke-width="0.9"/></svg></div></div>
<div class="tile" style="left:270.50px;top:535.50px;width:45px;height:33px"><div style="transform:translate(0.5px,-0.3px)"><svg width="14" height="14" viewBox="0 0 14 14"><circle cx="7" cy="7" r="6.6" fill="url(#fy)"/><ellipse cx="5" cy="5.3" rx="0.95" ry="1.4" fill="#3a2a1f"/><ellipse cx="9.2" cy="5.3" rx="0.95" ry="1.4" fill="#3a2a1f"/><path d="M4.6 10 Q7 8.4 9.4 10" stroke="#3a2a1f" stroke-width="0.9" fill="none"/></svg></div></div>
<div class="tile" style="left:320.40px;top:535.50px;width:45px;height:33px"><div style="transform:translate(0.5px,-0.3px)"><svg width="14" height="14" viewBox="0 0 14 14"><circle cx="7" cy="7" r="6.6" fill="url(#fy)"/><ellipse cx="5" cy="5.3" rx="0.95" ry="1.4" fill="#3a2a1f"/><ellipse cx="9.2" cy="5.3" rx="0.95" ry="1.4" fill="#3a2a1f"/><path d="M4.6 10 Q7 8.4 9.4 10" stroke="#3a2a1f" stroke-width="0.9" fill="none"/></svg></div></div>
<div class="tile" style="left:370.30px;top:535.50px;width:45px;height:33px"><div style="transform:translate(0.5px,-0.3px)"><svg width="14" height="14" viewBox="0 0 14 14"><circle cx="7" cy="7" r="6.6" fill="url(#fy)"/><ellipse cx="5" cy="5.3" rx="0.95" ry="1.4" fill="#3a2a1f"/><ellipse cx="9.2" cy="5.3" rx="0.95" ry="1.4" fill="#3a2a1f"/><path d="M4.6 10 Q7 8.4 9.4 10" stroke="#3a2a1f" stroke-width="0.9" fill="none"/><path d="M1.2 5.4 Q1.6 0.4 7 0.4 Q12.4 0.4 12.8 5.4 Q7 3.8 1.2 5.4Z" fill="#5b8fd9" opacity=".85"/></svg></div></div>
<div class="tile" style="left:420.20px;top:535.50px;width:45px;height:33px"><div style="transform:translate(0.5px,-0.3px)"><svg width="14" height="14" viewBox="0 0 14 14"><circle cx="7" cy="7" r="6.6" fill="url(#fy)"/><ellipse cx="5" cy="5.3" rx="0.95" ry="1.4" fill="#3a2a1f"/><ellipse cx="9.2" cy="5.3" rx="0.95" ry="1.4" fill="#3a2a1f"/><ellipse cx="7" cy="9.4" rx="1.3" ry="1.5" fill="#3a2a1f"/></svg></div></div>
</div>
</body></html>
